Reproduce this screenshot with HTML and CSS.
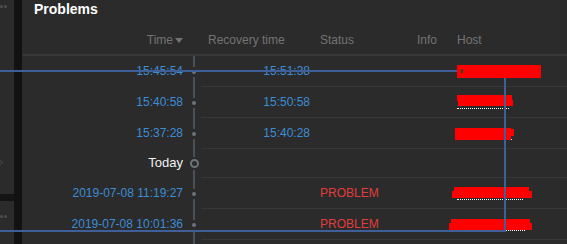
FILE: index.html
```html
<!DOCTYPE html>
<html>
<head>
	<title>Problems</title>
	<link rel="stylesheet" href="styles.css">
</head>
<body>
<div class="page">

	<!-- left dashboard widgets, cut off by the window -->
	<div class="side">
		<div class="side_top">
			<div class="dots"><i></i><i></i></div>
			<div class="chevron"></div>
		</div>
		<div class="side_gap"></div>
		<div class="side_bottom">
			<div class="dots"><i></i><i></i></div>
		</div>
	</div>
	<div class="divider"></div>

	<!-- problems widget -->
	<div class="panel">
		<div class="title">Problems</div>

		<div class="row head">
			<div class="c_time">Time<span class="sort"></span></div>
			<div class="c_line"></div>
			<div class="c_rec">Recovery time</div>
			<div class="c_status">Status</div>
			<div class="c_info">Info</div>
			<div class="c_host">Host</div>
		</div>

		<div class="row">
			<div class="c_time link">15:45:54</div>
			<div class="c_line"><span class="seg"></span><span class="dot"></span><span class="seg"></span></div>
			<div class="c_rec link">15:51:38</div>
			<div class="c_status"></div>
			<div class="c_info"></div>
			<div class="c_host">
				<span class="host w1"></span>
				<span class="mask m1a"></span>
				<span class="speck"></span>
			</div>
		</div>

		<div class="row">
			<div class="c_time link">15:40:58</div>
			<div class="c_line"><span class="seg"></span><span class="dot"></span><span class="seg"></span></div>
			<div class="c_rec link">15:50:58</div>
			<div class="c_status"></div>
			<div class="c_info"></div>
			<div class="c_host">
				<span class="host w2"></span>
				<span class="mask m2a"></span>
				<span class="mask m2b"></span>
			</div>
		</div>

		<div class="row">
			<div class="c_time link">15:37:28</div>
			<div class="c_line"><span class="seg"></span><span class="dot"></span><span class="seg"></span></div>
			<div class="c_rec link">15:40:28</div>
			<div class="c_status"></div>
			<div class="c_info"></div>
			<div class="c_host">
				<span class="host w3"></span>
				<span class="mask m3a"></span>
				<span class="mask m3b"></span>
			</div>
		</div>

		<div class="row day">
			<div class="c_time today">Today</div>
			<div class="c_line"><span class="seg"></span><span class="ring"></span><span class="seg"></span></div>
			<div class="c_rec"></div>
			<div class="c_status"></div>
			<div class="c_info"></div>
			<div class="c_host"></div>
		</div>

		<div class="row">
			<div class="c_time link">2019-07-08 11:19:27</div>
			<div class="c_line"><span class="seg"></span><span class="dot"></span><span class="seg"></span></div>
			<div class="c_rec"></div>
			<div class="c_status problem">PROBLEM</div>
			<div class="c_info"></div>
			<div class="c_host">
				<span class="host w5"></span>
				<span class="mask m5a"></span>
				<span class="mask m5b"></span>
			</div>
		</div>

		<div class="row">
			<div class="c_time link">2019-07-08 10:01:36</div>
			<div class="c_line"><span class="seg"></span><span class="dot"></span><span class="seg"></span></div>
			<div class="c_rec"></div>
			<div class="c_status problem">PROBLEM</div>
			<div class="c_info"></div>
			<div class="c_host">
				<span class="host w6"></span>
				<span class="mask m6a"></span>
				<span class="mask m6b"></span>
			</div>
		</div>

		<div class="row">
			<div class="c_time"></div>
			<div class="c_line"><span class="seg"></span></div>
			<div class="c_rec"></div>
			<div class="c_status"></div>
			<div class="c_info"></div>
			<div class="c_host"></div>
		</div>
	</div>

	<!-- hand drawn blue marker lines over the screenshot -->
	<div class="mark_h mark_top"></div>
	<div class="mark_v"></div>
	<div class="mark_h mark_bottom"></div>
</div>
</body>
</html>
```

FILE: styles.css
```css
html, body
{
	margin: 0;
	padding: 0;
	background-color: #2b2b2b;
	font-family: "Liberation Sans", Arial, sans-serif;
	font-size: 12px;
}
.page
{
	position: relative;
	display: flex;
	height: 244px;
	overflow: hidden;
}

/* left side */
.side
{
	width: 14px;
	display: flex;
	flex-direction: column;
}
.side_top
{
	height: 194px;
	display: flex;
	flex-direction: column;
}
.side_gap
{
	height: 7px;
	background-color: #141414;
}
.side_bottom
{
	flex: 1;
}
.dots
{
	display: flex;
	gap: 1px;
	padding-top: 5px;
}
.side_bottom .dots
{
	padding-top: 14px;
}
.dots i
{
	width: 3px;
	height: 3px;
	border-radius: 50%;
	background-color: #4f4f4f;
}
.chevron
{
	width: 4px;
	height: 4px;
	margin-top: 152px;
	margin-left: -3px;
	border-top: 1px solid #454545;
	border-right: 1px solid #454545;
	transform: rotate(45deg);
}
.divider
{
	width: 8px;
	background-color: #121212;
}

/* panel */
.panel
{
	flex: 1;
	padding-left: 1px;
}
.title
{
	height: 23px;
	line-height: 18px;
	padding-left: 11px;
	color: #ffffff;
	font-size: 14px;
	font-weight: bold;
}
.row
{
	display: grid;
	grid-template-columns: 164px 14px 112px 97px 41px 1fr;
	height: 31px;
	line-height: 30px;
	box-sizing: border-box;
}
.row.day
{
	height: 29px;
	line-height: 28px;
}
.row:not(.head) > div:nth-child(n+3)
{
	border-bottom: 1px solid #383838;
}
.head
{
	height: 33px;
	padding-top: 4px;
	line-height: 27px;
	border-bottom: 2px solid #383838;
	color: #737373;
}
.c_time
{
	text-align: right;
	padding-right: 4px;
	white-space: nowrap;
}
.c_rec, .c_status, .c_info, .c_host
{
	padding-left: 7px;
	white-space: nowrap;
}
.row:not(.head) .c_rec
{
	text-align: right;
	padding-right: 3px;
}
.sort
{
	display: inline-block;
	width: 0;
	height: 0;
	margin-left: 2px;
	vertical-align: 1px;
	border-left: 4px solid transparent;
	border-right: 4px solid transparent;
	border-top: 5px solid #737373;
}
.link
{
	color: #3d8dd5;
}
.today
{
	color: #f2f2f2;
	font-size: 13px;
}
.problem
{
	color: #e23b3b;
}

/* timeline */
.c_line
{
	display: flex;
	flex-direction: column;
	align-items: center;
}
.seg
{
	flex: 1;
	width: 2px;
	background-color: #4a5057;
}
.dot
{
	width: 4px;
	height: 4px;
	margin: 3px 0;
	border-radius: 50%;
	background-color: #6c737b;
}
.ring
{
	width: 5px;
	height: 5px;
	margin: 2px 0;
	border: 2px solid #6c737b;
	border-radius: 50%;
}

/* hosts, hidden with red marker */
.c_host
{
	position: relative;
	padding-left: 6px;
}
.host
{
	display: block;
	margin-top: 9px;
	height: 12px;
	border-bottom: 1px dotted #ffffff;
}
.w1 { width: 79px; }
.w2 { width: 52px; }
.w3 { width: 55px; }
.w5 { width: 66px; }
.w6 { width: 68px; }
.mask
{
	position: absolute;
	background-color: #ff0000;
}
.m1a { left: 6px; top: 9px; width: 84px; height: 13px; }
.m2a { left: 6px; top: 8px; width: 55px; height: 6px; }
.m2b { left: 7px; top: 13px; width: 55px; height: 6px; }
.m3a { left: 4px; top: 10px; width: 56px; height: 12px; }
.m3b { left: 4px; top: 11px; width: 59px; height: 7px; }
.m5a { left: 3px; top: 9px; width: 75px; height: 4px; }
.m5b { left: 1px; top: 13px; width: 80px; height: 7px; }
.m6a { left: 0px; top: 10px; width: 79px; height: 4px; }
.m6b { left: -2px; top: 14px; width: 83px; height: 7px; }
.speck
{
	position: absolute;
	left: 10px;
	top: 13px;
	width: 2px;
	height: 4px;
	background-color: #2c4a12;
}

/* blue marker lines */
.mark_h
{
	position: absolute;
	left: 0;
	height: 2px;
	background-color: #3f5f99;
}
.mark_top
{
	top: 70px;
	width: 457px;
}
.mark_bottom
{
	top: 230px;
	width: 506px;
}
.mark_v
{
	position: absolute;
	left: 504px;
	top: 78px;
	width: 2px;
	height: 154px;
	background-color: #3f5f99;
}
```
